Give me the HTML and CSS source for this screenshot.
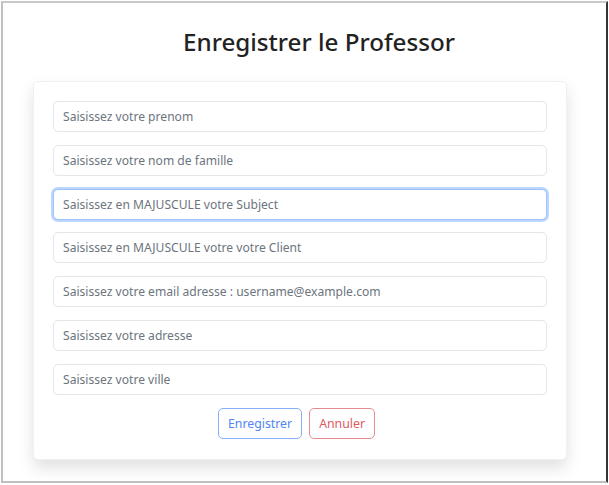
FILE: index.html
```html
<!DOCTYPE html>
<html lang="fr">
<head>
<meta charset="utf-8">
<title>Enregistrer le Professor</title>
<link rel="stylesheet" href="styles.css">
</head>
<body>
<div class="frame">
  <h1 class="title">Enregistrer le Professor</h1>
  <form class="card">
    <input class="field" type="text" placeholder="Saisissez votre prenom">
    <input class="field" type="text" placeholder="Saisissez votre nom de famille">
    <input class="field focus" type="text" placeholder="Saisissez en MAJUSCULE votre Subject" autofocus>
    <input class="field" type="text" placeholder="Saisissez en MAJUSCULE votre votre Client">
    <input class="field" type="email" placeholder="Saisissez votre email adresse : username@example.com">
    <input class="field" type="text" placeholder="Saisissez votre adresse">
    <input class="field" type="text" placeholder="Saisissez votre ville">
    <div class="actions">
      <button type="button" class="btn btn-primary">Enregistrer</button>
      <button type="button" class="btn btn-danger">Annuler</button>
    </div>
  </form>
</div>
</body>
</html>
```
FILE: styles.css
```css
html, body {
  margin: 0;
  padding: 0;
  background: #fff;
}
body {
  font-family: "Noto Sans", "Open Sans", sans-serif;
  color: #212529;
}
.frame {
  box-sizing: border-box;
  margin: 1px 1px 2px 1px;
  height: 482px;
  width: 607px;
  border-top: 2px solid #c8c8c8;
  border-left: 2px solid #c0c0c0;
  border-bottom: 2px solid #c0c0c0;
  border-right: 2px solid #333;
  padding: 0 39px 0 30px;
}
.title {
  margin: 21px 0 0 0;
  padding-left: 150px;
  font-size: 24.2px;
  font-weight: 500;
  line-height: 36px;
  color: #222;
}
.card {
  margin-top: 21px;
  background: #fff;
  border: 1px solid #eef0f2;
  border-radius: 5px;
  box-shadow: 0 8px 16px rgba(0,0,0,0.12);
  padding: 19px 19px 20px 19px;
  display: flex;
  flex-direction: column;
  gap: 12.8px;
}
.field {
  box-sizing: border-box;
  height: 31px;
  width: 100%;
  margin: 0;
  border: 1px solid #e3e6ea;
  border-radius: 5px;
  padding: 0 9px;
  font-family: inherit;
  font-size: 12.1px;
  color: #495057;
  background: #fff;
  outline: none;
}
.field::placeholder {
  color: #6c757d;
}
.field.focus {
  border-color: #9cc2fc;
  box-shadow: 0 0 0 2px rgba(13,110,253,0.28);
}
.actions {
  display: flex;
  justify-content: center;
  gap: 7px;
  padding-right: 7px;
}
.btn {
  box-sizing: border-box;
  height: 31px;
  padding: 0 9px;
  border-radius: 5px;
  background: #fff;
  font-family: inherit;
  font-size: 12.3px;
  cursor: pointer;
}
.btn-primary {
  border: 1.5px solid #86aef9;
  color: #4f84f3;
}
.btn-danger {
  border: 1.5px solid #e68d93;
  color: #dc5a64;
}
```
